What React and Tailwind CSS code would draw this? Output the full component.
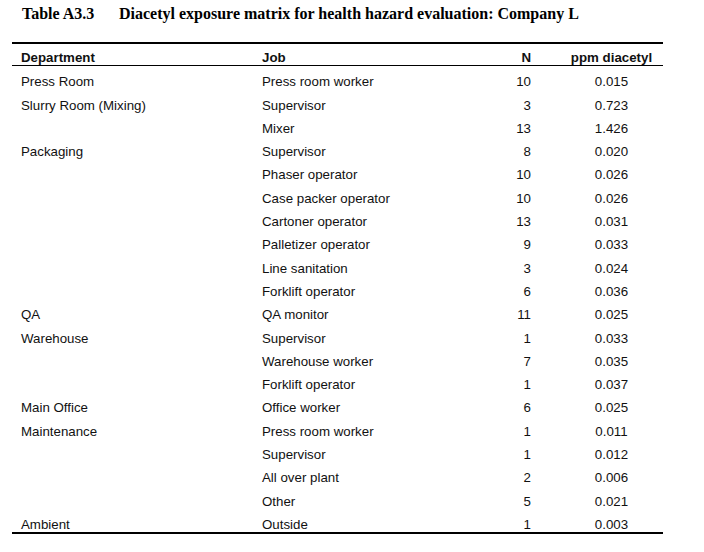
import React from 'react';

const rows = [
  ['Press Room', 'Press room worker', '10', '0.015'],
  ['Slurry Room (Mixing)', 'Supervisor', '3', '0.723'],
  ['', 'Mixer', '13', '1.426'],
  ['Packaging', 'Supervisor', '8', '0.020'],
  ['', 'Phaser operator', '10', '0.026'],
  ['', 'Case packer operator', '10', '0.026'],
  ['', 'Cartoner operator', '13', '0.031'],
  ['', 'Palletizer operator', '9', '0.033'],
  ['', 'Line sanitation', '3', '0.024'],
  ['', 'Forklift operator', '6', '0.036'],
  ['QA', 'QA monitor', '11', '0.025'],
  ['Warehouse', 'Supervisor', '1', '0.033'],
  ['', 'Warehouse worker', '7', '0.035'],
  ['', 'Forklift operator', '1', '0.037'],
  ['Main Office', 'Office worker', '6', '0.025'],
  ['Maintenance', 'Press room worker', '1', '0.011'],
  ['', 'Supervisor', '1', '0.012'],
  ['', 'All over plant', '2', '0.006'],
  ['', 'Other', '5', '0.021'],
  ['Ambient', 'Outside', '1', '0.003'],
];

const cols = 'grid grid-cols-[250px_218px_51px_132px] items-end';

export default function App() {
  return (
    <div className="w-[704px] h-[552px] bg-white text-black overflow-hidden">
      {/* caption */}
      <div className="pl-[22px] pt-[5px] leading-[18px] text-[16px] font-bold font-['Liberation_Serif',serif]">
        <span className="inline-block w-[97px]">Table A3.3</span>
        <span>Diacetyl exposure matrix for health hazard evaluation: Company L</span>
      </div>

      <div className="ml-[12px] w-[651px] mt-[19px] border-t-2 border-black text-[13.3px] leading-[15px] text-[#111] font-['Liberation_Sans',Arial,sans-serif]">
        <div className={`${cols} h-[22px] border-b-[1.5px] border-black font-bold`}>
          <div className="pl-[9px]">Department</div>
          <div>Job</div>
          <div className="text-right">N</div>
          <div className="pl-[29px] text-center">ppm diacetyl</div>
        </div>
        <div className="border-b-2 border-black">
          {rows.map((r, i) => (
            <div key={i} className={`${cols} h-[23.3px]`}>
              <div className="pl-[9px]">{r[0]}</div>
              <div>{r[1]}</div>
              <div className="text-right">{r[2]}</div>
              <div className="pl-[29px] text-center">{r[3]}</div>
            </div>
          ))}
        </div>
      </div>
    </div>
  );
}
